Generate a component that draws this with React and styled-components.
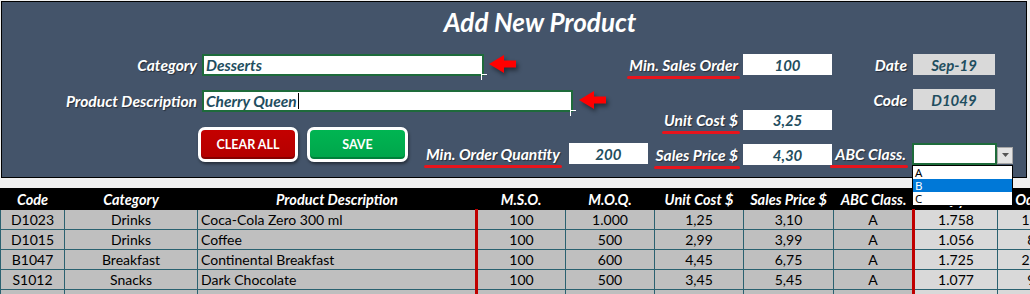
import React from 'react'
import styled, { createGlobalStyle } from 'styled-components'

const GlobalStyle = createGlobalStyle`
  html, body {
    margin: 0;
    padding: 0;
    background: #f0f0f0;
    overflow: hidden;
  }
  body {
    font-family: Lato, 'Liberation Sans', sans-serif;
  }
`

const Page = styled.div`
  width: 1030px;
  height: 294px;
  overflow: hidden;
  padding-top: 1px;
  box-sizing: border-box;
  background: #f0f0f0;
`

const Panel = styled.section`
  position: relative;
  margin: 0 3px 0 1px;
  height: 175px;
  background: #44546a;
  border: 1px solid #000;
`

const Title = styled.h1`
  margin: 0;
  padding: 5px 0 0 52px;
  line-height: 30px;
  font-size: 26px;
  font-weight: 700;
  font-style: italic;
  color: #fff;
  text-align: center;
`

const FieldArea = styled.div`
  display: flex;
  align-items: flex-start;
  margin-top: 17px;
`

const LeftCol = styled.div`
  display: flex;
  flex-direction: column;
  width: 648px;
  flex-shrink: 0;
`

const MidCol = styled.div`
  display: flex;
  flex-direction: column;
  align-items: flex-end;
  width: 182px;
  flex-shrink: 0;
`

const RightCol = styled.div`
  display: flex;
  flex-direction: column;
  width: 181px;
  flex-shrink: 0;
`

const Row = styled.div`
  display: flex;
  align-items: center;
  white-space: nowrap;
  height: ${(p) => p.$h || 21}px;
  margin-top: ${(p) => p.$top || 0}px;
  gap: ${(p) => p.$gap || 0}px;
`

const Label = styled.span`
  position: relative;
  display: inline-block;
  line-height: 18px;
  font-size: 15.6px;
  font-weight: 700;
  font-style: italic;
  color: #fff;
  white-space: nowrap;
  text-shadow: 1px 1px 1px rgba(0, 0, 0, 0.45);
  text-align: right;
  ${(p) => (p.$w ? `width: ${p.$w}px;` : '')}

  ${(p) =>
    p.$underline &&
    `
    &::after {
      content: '';
      position: absolute;
      left: -2px;
      right: -2px;
      top: 20px;
      height: 3px;
      border-radius: 2px;
      background: #e8141c;
    }
  `}
`

const TextBox = styled.div`
  position: relative;
  display: flex;
  align-items: center;
  box-sizing: border-box;
  width: ${(p) => p.$w}px;
  height: 22px;
  margin-left: 5px;
  padding-left: 2px;
  background: #fff;
  border: 2px solid #1e6b3b;
  font-size: 15.5px;
  font-weight: 700;
  font-style: italic;
  color: #1f4e5f;

  &::after {
    content: '';
    position: absolute;
    right: -5px;
    bottom: -6px;
    width: 5px;
    height: 5px;
    border-top: 1px solid #fff;
    border-left: 1px solid #fff;
  }
`

const Caret = styled.span`
  display: inline-block;
  width: 1px;
  height: 16px;
  margin-left: 1px;
  background: #000;
`

const ValueBox = styled.div`
  display: flex;
  align-items: center;
  justify-content: center;
  box-sizing: border-box;
  width: ${(p) => p.$w}px;
  height: ${(p) => p.$h || 21}px;
  background: ${(p) => (p.$gray ? '#d9d9d9' : '#fff')};
  font-size: 15px;
  font-weight: 700;
  font-style: italic;
  color: #1f4e5f;
`

const ArrowIcon = styled.svg`
  flex-shrink: 0;
  margin-left: ${(p) => p.$ml}px;
  margin-top: -2px;
  filter: drop-shadow(2px 3px 2px rgba(0, 0, 0, 0.45));
`

const ButtonRow = styled.div`
  display: flex;
  align-items: flex-start;
  margin-top: 15px;
  padding-left: 196px;
`

const ActionButton = styled.button`
  display: flex;
  align-items: center;
  justify-content: center;
  box-sizing: border-box;
  width: ${(p) => p.$w}px;
  height: 35px;
  margin-right: 9px;
  padding: 0;
  border: 3px solid #fff;
  border-radius: 7px;
  background: ${(p) =>
    p.$variant === 'save'
      ? 'linear-gradient(#00b552, #00a54b)'
      : 'linear-gradient(#c40000, #b30000)'};
  box-shadow: inset 0 -2px 0 ${(p) => (p.$variant === 'save' ? '#00803a' : '#860000')},
    1px 2px 3px rgba(0, 0, 0, 0.45);
  font-family: Lato, 'Liberation Sans', sans-serif;
  font-size: 12.5px;
  font-weight: 700;
  color: #fff;
  cursor: pointer;
`

const MoqGroup = styled.div`
  display: flex;
  align-items: center;
  gap: 9px;
  height: 21px;
  margin: 16px 0 0 9px;
`

const Combo = styled.div`
  position: relative;
  display: flex;
  align-items: center;
  margin-left: 6px;
  height: 21px;
`

const ComboInput = styled.div`
  box-sizing: border-box;
  width: 85px;
  height: 22px;
  background: #fff;
  border: 2px solid #1e6b3b;
`

const ComboButton = styled.div`
  display: flex;
  align-items: center;
  justify-content: center;
  box-sizing: border-box;
  width: 16px;
  height: 17px;
  margin: 3px 0 0 0;
  background: #e4e4e4;
  border: 1px solid #a6a6a6;
`

const ComboList = styled.ul`
  position: absolute;
  z-index: 10;
  top: 22px;
  left: 0;
  box-sizing: border-box;
  width: 101px;
  margin: 0;
  padding: 0;
  list-style: none;
  background: #fff;
  border: 1px solid #000;
`

const ComboItem = styled.li`
  height: 13px;
  line-height: 13px;
  padding-left: 2px;
  font-family: 'Noto Sans', 'Open Sans', sans-serif;
  font-size: 11.5px;
  color: ${(p) => (p.$active ? '#fff' : '#000')};
  background: ${(p) => (p.$active ? '#0078d7' : '#fff')};
`

const TableWrap = styled.div`
  width: 1030px;
  margin-top: 10px;
  overflow: hidden;
`

const Table = styled.table`
  width: 1081px;
  table-layout: fixed;
  border-collapse: collapse;
`

const HeadCell = styled.th`
  height: 20px;
  padding: 0;
  background: #000;
  border: 1px solid #000;
  color: #fff;
  font-size: 14.5px;
  font-weight: 700;
  font-style: italic;
  text-align: center;
  white-space: nowrap;
  overflow: hidden;
`

const Cell = styled.td`
  height: 19px;
  padding: ${(p) => (p.$left ? '0 0 0 3px' : '0')};
  background: ${(p) => (p.$light ? '#d9d9d9' : '#bfbfbf')};
  border: 1px solid #2a6170;
  border-left: ${(p) => (p.$divider ? '3px solid #c00000' : '1px solid #2a6170')};
  color: #000;
  font-size: 14px;
  text-align: ${(p) => (p.$left ? 'left' : 'center')};
  white-space: nowrap;
  overflow: hidden;
`

const columns = [
  { title: 'Code', w: 64 },
  { title: 'Category', w: 133 },
  { title: 'Product Description', w: 279, left: true },
  { title: 'M.S.O.', w: 89, divider: true },
  { title: 'M.O.Q.', w: 89 },
  { title: 'Unit Cost $', w: 89 },
  { title: 'Sales Price $', w: 90 },
  { title: 'ABC Class.', w: 80 },
  { title: 'Qty.', w: 84, divider: true, light: true },
  { title: 'Od. Qty', w: 84, light: true },
]

const rows = [
  ['D1023', 'Drinks', 'Coca-Cola Zero 300 ml', '100', '1.000', '1,25', '3,10', 'A', '1.758', '1.240'],
  ['D1015', 'Drinks', 'Coffee', '100', '500', '2,99', '3,99', 'A', '1.056', '845'],
  ['B1047', 'Breakfast', 'Continental Breakfast', '100', '600', '4,45', '6,75', 'A', '1.725', '2.150'],
  ['S1012', 'Snacks', 'Dark Chocolate', '100', '500', '3,45', '5,45', 'A', '1.077', '931'],
  ['', '', '', '', '', '', '', '', '', ''],
]

function Arrow({ ml }) {
  return (
    <ArrowIcon $ml={ml} width="27" height="18" viewBox="0 0 27 18">
      <polygon points="0,9 15,0 15,5.5 27,5.5 27,12.5 15,12.5 15,18" fill="#ff0000" />
    </ArrowIcon>
  )
}

export default function App() {
  return (
    <Page>
      <GlobalStyle />
      <Panel>
        <Title>Add New Product</Title>
        <FieldArea>
          <LeftCol>
            <Row $h={22}>
              <Label $w={195}>Category</Label>
              <TextBox $w={282}>Desserts</TextBox>
              <Arrow ml={5} />
            </Row>
            <Row $h={22} $top={14}>
              <Label $w={195}>Product Description</Label>
              <TextBox $w={371}>
                Cherry Queen
                <Caret />
              </TextBox>
              <Arrow ml={6} />
            </Row>
            <ButtonRow>
              <ActionButton $w={100}>CLEAR ALL</ActionButton>
              <ActionButton $w={101} $variant="save">
                SAVE
              </ActionButton>
              <MoqGroup>
                <Label $underline>Min. Order Quantity</Label>
                <ValueBox $w={79}>200</ValueBox>
              </MoqGroup>
            </ButtonRow>
          </LeftCol>

          <MidCol>
            <Row $gap={5}>
              <Label $underline>Min. Sales Order</Label>
              <ValueBox $w={89}>100</ValueBox>
            </Row>
            <Row $gap={5} $h={20} $top={35}>
              <Label $underline>Unit Cost $</Label>
              <ValueBox $w={89} $h={20}>
                3,25
              </ValueBox>
            </Row>
            <Row $gap={5} $top={14}>
              <Label $underline>Sales Price $</Label>
              <ValueBox $w={89}>4,30</ValueBox>
            </Row>
          </MidCol>

          <RightCol>
            <Row $gap={6}>
              <Label $w={75}>Date</Label>
              <ValueBox $w={82} $gray>
                Sep-19
              </ValueBox>
            </Row>
            <Row $gap={6} $top={14}>
              <Label $w={75}>Code</Label>
              <ValueBox $w={82} $gray>
                D1049
              </ValueBox>
            </Row>
            <Row $top={33}>
              <Label $w={75} $underline>
                ABC Class.
              </Label>
              <Combo>
                <ComboInput />
                <ComboButton>
                  <svg width="7" height="4" viewBox="0 0 7 4">
                    <polygon points="0,0 7,0 3.5,4" fill="#555" />
                  </svg>
                </ComboButton>
                <ComboList>
                  <ComboItem>A</ComboItem>
                  <ComboItem $active>B</ComboItem>
                  <ComboItem>C</ComboItem>
                </ComboList>
              </Combo>
            </Row>
          </RightCol>
        </FieldArea>
      </Panel>

      <TableWrap>
        <Table>
          <colgroup>
            {columns.map((c) => (
              <col key={c.title} style={{ width: c.w }} />
            ))}
          </colgroup>
          <thead>
            <tr>
              {columns.map((c) => (
                <HeadCell key={c.title}>{c.title}</HeadCell>
              ))}
            </tr>
          </thead>
          <tbody>
            {rows.map((r, i) => (
              <tr key={i}>
                {r.map((v, j) => (
                  <Cell
                    key={j}
                    $left={columns[j].left}
                    $divider={columns[j].divider}
                    $light={columns[j].light}
                  >
                    {v}
                  </Cell>
                ))}
              </tr>
            ))}
          </tbody>
        </Table>
      </TableWrap>
    </Page>
  )
}
